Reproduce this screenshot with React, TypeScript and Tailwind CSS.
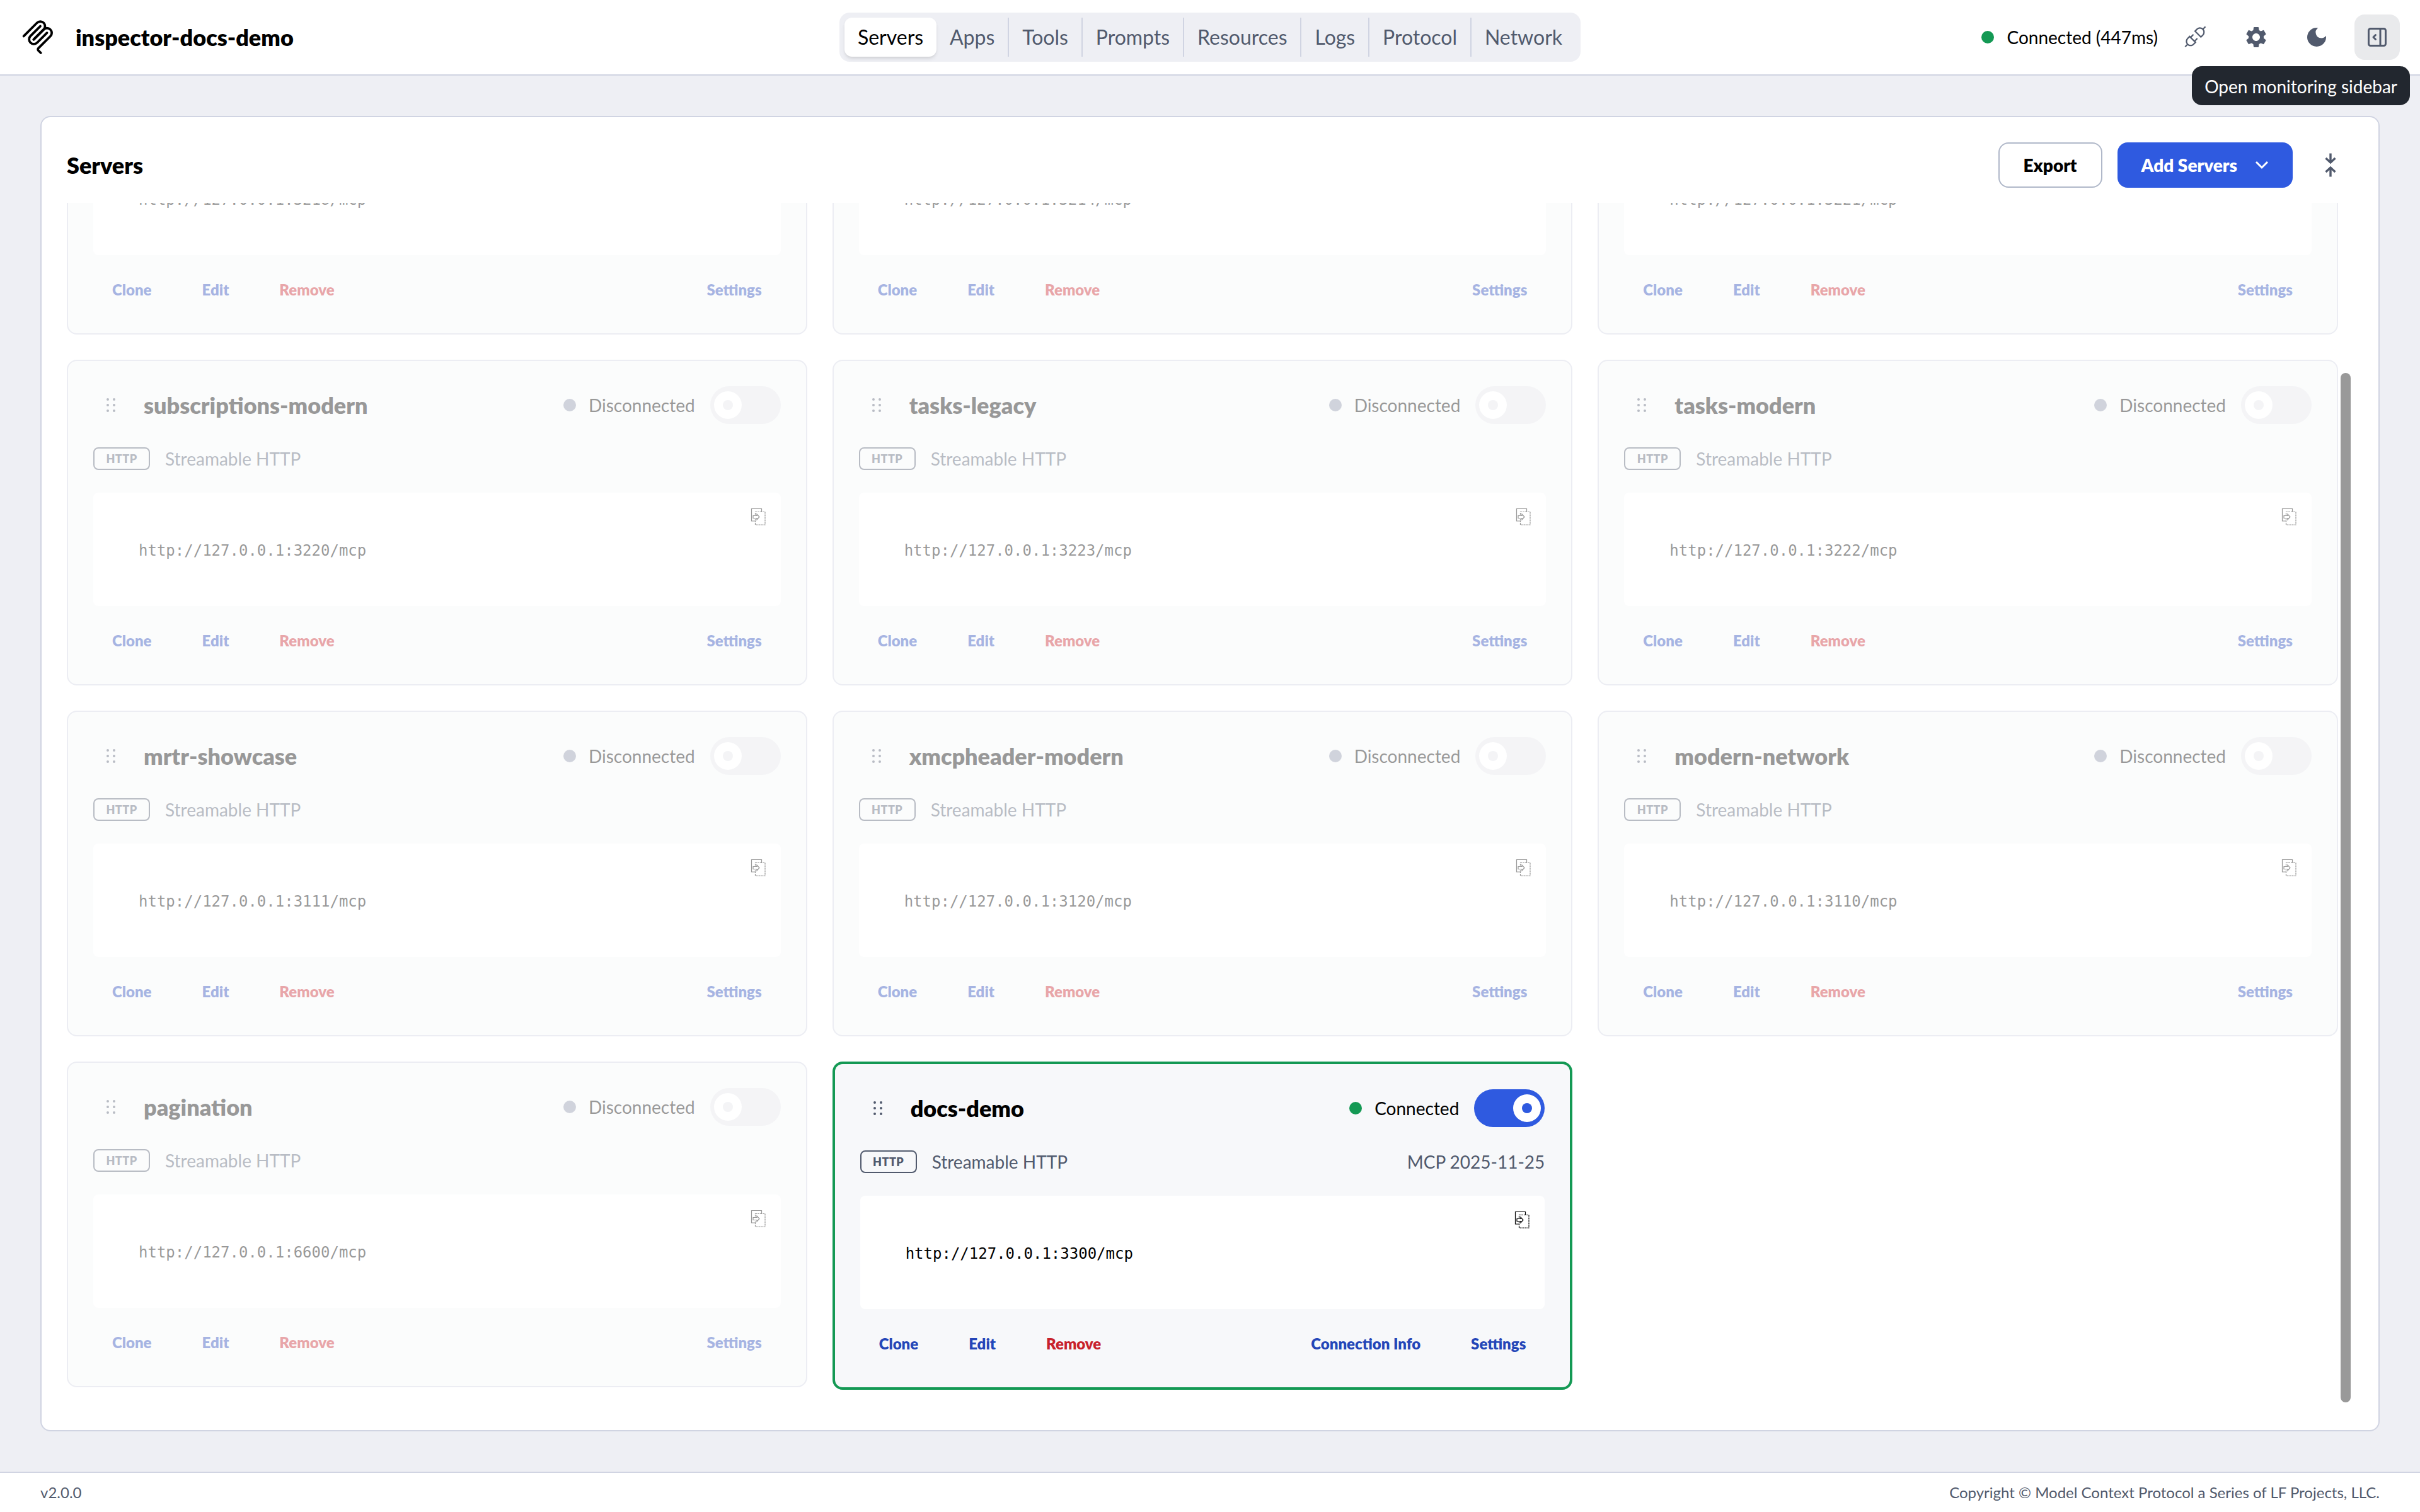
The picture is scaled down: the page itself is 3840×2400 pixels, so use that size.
import React, { useState } from "react";
import { MdSettings, MdDarkMode } from "react-icons/md";
import { VscDebugDisconnect } from "react-icons/vsc";

type Server = {
  name?: string;
  url: string;
  connected?: boolean;
  version?: string;
};

const TABS = ["Servers", "Apps", "Tools", "Prompts", "Resources", "Logs", "Protocol", "Network"];

// entries without a name are scrolled half out of view and only show their lower part
const SERVERS: Server[] = [
  { url: "http://127.0.0.1:3218/mcp" },
  { url: "http://127.0.0.1:3214/mcp" },
  { url: "http://127.0.0.1:3221/mcp" },
  { name: "subscriptions-modern", url: "http://127.0.0.1:3220/mcp" },
  { name: "tasks-legacy", url: "http://127.0.0.1:3223/mcp" },
  { name: "tasks-modern", url: "http://127.0.0.1:3222/mcp" },
  { name: "mrtr-showcase", url: "http://127.0.0.1:3111/mcp" },
  { name: "xmcpheader-modern", url: "http://127.0.0.1:3120/mcp" },
  { name: "modern-network", url: "http://127.0.0.1:3110/mcp" },
  { name: "pagination", url: "http://127.0.0.1:6600/mcp" },
  { name: "docs-demo", url: "http://127.0.0.1:3300/mcp", connected: true, version: "MCP 2025-11-25" },
];

const McpLogo = () => (
  <svg viewBox="0 0 180 180" className="size-14" fill="none" stroke="currentColor" strokeWidth={12} strokeLinecap="round">
    <path d="M18 84.8528L85.8822 16.9706C95.2548 7.59798 110.451 7.59798 119.823 16.9706C129.196 26.3431 129.196 41.5391 119.823 50.9117L68.5581 102.177" />
    <path d="M69.2652 101.47L119.823 50.9117C129.196 41.5391 144.392 41.5391 153.765 50.9117L154.118 51.2652C163.491 60.6378 163.491 75.8338 154.118 85.2063L92.7248 146.6C89.6006 149.724 89.6006 154.789 92.7248 157.913L105.331 170.52" />
    <path d="M102.853 33.9411L52.6482 84.1457C43.2756 93.5183 43.2756 108.714 52.6482 118.087C62.0208 127.459 77.2167 127.459 86.5893 118.087L136.794 67.8822" />
  </svg>
);

const GripIcon = () => (
  <svg viewBox="0 0 14 24" className="w-3.5 h-6" fill="currentColor">
    {[3, 12, 21].map((y) => (
      <g key={y}>
        <circle cx="2" cy={y} r="2" />
        <circle cx="12" cy={y} r="2" />
      </g>
    ))}
  </svg>
);

const CopyIcon = () => (
  <svg viewBox="0 0 24 28" className="w-6 h-7" fill="none" stroke="currentColor" strokeWidth={1.2}>
    <path d="M7 21H1.5V1.5H17.5V6" />
    <path d="M7.5 11V6.5H23V27H7.5V18" strokeDasharray="3 1" />
    <path d="M4 12.5H10V10L14 14.5L10 19V16.5H4Z" />
  </svg>
);

const CollapseIcon = () => (
  <svg viewBox="0 0 20 40" className="w-5 h-10" fill="none" stroke="currentColor" strokeWidth={3.4}>
    <path d="M10 1.5V15M2.5 9L10 16L17.5 9" />
    <path d="M10 38.5V25M2.5 31L10 24L17.5 31" />
  </svg>
);

const SidebarIcon = () => (
  <svg viewBox="0 0 30 30" className="size-[30px]" fill="none" stroke="currentColor" strokeWidth={3}>
    <rect x="1.5" y="1.5" width="27" height="27" rx="3" />
    <path d="M20 2V28" />
    <path d="M12.5 11.5L9 15L12.5 18.500" strokeLinecap="round" strokeLinejoin="round" />
  </svg>
);

const CardButton = ({ children, danger }: { children: React.ReactNode; danger?: boolean }) => (
  <button
    type="button"
    className={`h-[46px] px-[30px] text-[24px] leading-[46px] font-extrabold cursor-pointer ${
      danger ? "text-[#c8222b]" : "text-[#2446b8]"
    }`}
  >
    {children}
  </button>
);

const ServerCard = ({ server }: { server: Server }) => {
  const [on, setOn] = useState(!!server.connected);

  return (
    <article
      className={`rounded-2xl bg-[#f7f8fa] px-10 pt-10 pb-[46px] ${
        server.connected ? "border-4 border-[#149954]" : "border-2 border-[#d0d4e2] opacity-40"
      }`}
    >
      {server.name && (
        <>
          {/* name + status */}
          <div className="flex items-center h-[60px]">
            <button type="button" aria-label="Reorder" className="flex justify-center w-14 text-[#515a6d] cursor-grab">
              <GripIcon />
            </button>
            <h3 className="ml-6 text-[36px] leading-[44px] font-extrabold">{server.name}</h3>
            <div className="flex items-center ml-auto">
              <span className={`size-5 rounded-full ${server.connected ? "bg-[#149954]" : "bg-[#8b94a9]"}`} />
              <span className="ml-5 mr-6 text-[28px] leading-[44px]">
                {server.connected ? "Connected" : "Disconnected"}
              </span>
              <label
                className={`flex items-center w-28 h-[60px] px-1.5 rounded-full cursor-pointer ${
                  on ? "justify-end bg-[#2f5ae0]" : "bg-[#e4e6eb]"
                }`}
              >
                <input
                  type="checkbox"
                  aria-label={`Connect ${server.name}`}
                  checked={on}
                  onChange={(e) => setOn(e.target.checked)}
                  className="sr-only"
                />
                <span className="flex items-center justify-center size-11 rounded-full bg-white">
                  <span className={`size-4 rounded-full ${on ? "bg-[#2f5ae0]" : "bg-[#e4e6eb]"}`} />
                </span>
              </label>
            </div>
          </div>

          {/* transport */}
          <div className="flex items-center h-[45px] mt-8 mb-8 text-[28px] leading-[44px] text-[#515a6d]">
            <span className="flex items-center justify-center w-[90px] h-9 mr-6 rounded-lg border-2 border-[#515a6d] text-[18px] leading-[32px] font-extrabold tracking-wide">
              HTTP
            </span>
            Streamable HTTP
            <span className="ml-auto">{server.version}</span>
          </div>
        </>
      )}

      {/* url */}
      <div className="relative flex items-center h-[180px] pt-1 px-[72px] rounded-lg bg-white">
        <code className="font-['DejaVu_Sans_Mono',monospace] text-[24px] leading-[36px]">{server.url}</code>
        <button type="button" aria-label="Copy" className="absolute top-6 right-6 cursor-pointer">
          <CopyIcon />
        </button>
      </div>

      {/* actions */}
      <div className="flex gap-5 mt-8">
        <CardButton>Clone</CardButton>
        <CardButton>Edit</CardButton>
        <CardButton danger>Remove</CardButton>
        <div className="flex gap-5 ml-auto">
          {server.connected && <CardButton>Connection Info</CardButton>}
          <CardButton>Settings</CardButton>
        </div>
      </div>
    </article>
  );
};

const IconButton = ({ label, className = "", children }: { label: string; className?: string; children: React.ReactNode }) => (
  <button
    type="button"
    aria-label={label}
    className={`flex items-center justify-center size-[72px] rounded-2xl text-[#515a6d] cursor-pointer ${className}`}
  >
    {children}
  </button>
);

const App = () => {
  const [tab, setTab] = useState("Servers");

  return (
    <div className="flex flex-col h-screen bg-[#eeeff4] font-['Lato',sans-serif] text-black">
      <header className="grid grid-cols-[1fr_auto_1fr] items-center h-[120px] px-8 bg-white border-b-2 border-[#d0d4e2]">
        <div className="flex items-center gap-8">
          <McpLogo />
          <h1 className="text-[36px] leading-[44px] font-extrabold">inspector-docs-demo</h1>
        </div>

        <nav className="flex w-[1176px] p-2 rounded-2xl bg-[#eeeff4]">
          {TABS.map((t, i) => (
            <button
              key={t}
              type="button"
              onClick={() => setTab(t)}
              className={`flex-auto h-[62px] text-[32px] leading-[62px] cursor-pointer ${
                t === tab
                  ? "rounded-xl bg-white shadow-md"
                  : `text-[#515a6d] ${i > 1 ? "border-l-2 border-[#d0d4e2]" : ""}`
              }`}
            >
              {t}
            </button>
          ))}
        </nav>

        <div className="flex items-center justify-end gap-6">
          <div className="flex items-center gap-5">
            <span className="size-5 rounded-full bg-[#149954]" />
            <span className="text-[28px] leading-[44px]">Connected (447ms)</span>
          </div>
          <IconButton label="Disconnect">
            <VscDebugDisconnect className="size-10" />
          </IconButton>
          <IconButton label="Settings">
            <MdSettings className="size-10" />
          </IconButton>
          <IconButton label="Toggle dark mode">
            <MdDarkMode className="size-10" />
          </IconButton>
          <div className="relative">
            <IconButton label="Open monitoring sidebar" className="bg-[#e9eaec]">
              <SidebarIcon />
            </IconButton>
            <div
              role="tooltip"
              className="absolute -right-4 top-[82px] z-10 h-[62px] px-5 rounded-2xl bg-[#22272f] text-[28px] leading-[64px] text-white whitespace-nowrap"
            >
              Open monitoring sidebar
            </div>
          </div>
        </div>
      </header>

      <main className="flex flex-col flex-1 min-h-0 p-16">
        <section className="flex flex-col flex-1 min-h-0 gap-6 p-10 rounded-2xl bg-white border-2 border-[#d0d4e2]">
          <div className="flex items-center gap-6">
            <h2 className="mr-auto text-[36px] leading-[44px] font-extrabold">Servers</h2>
            <button type="button" className="h-[72px] px-[38px] rounded-2xl border-2 border-[#b0b8c9] text-[28px] font-extrabold cursor-pointer">
              Export
            </button>
            <button type="button" className="flex items-center gap-7 h-[72px] px-[38px] rounded-2xl bg-[#2f5ae0] text-[28px] font-extrabold text-white cursor-pointer">
              Add Servers
              <svg viewBox="0 0 22 14" className="w-[22px] h-3.5" fill="none" stroke="currentColor" strokeWidth={3}>
                <path d="M2 2L11 11L20 2" />
              </svg>
            </button>
            <IconButton label="Collapse all">
              <CollapseIcon />
            </IconButton>
          </div>

          {/* the list is scrolled to its end */}
          <div className="flex flex-1 min-h-0 overflow-hidden">
            <div className="flex flex-col justify-end flex-1">
              <div className="grid grid-cols-3 items-start gap-10 pb-6">
                {SERVERS.map((s) => (
                  <ServerCard key={s.url} server={s} />
                ))}
              </div>
            </div>
            <div className="flex flex-col justify-end w-6 p-1">
              <div className="h-[86%] w-4 rounded-full bg-[#999999]" />
            </div>
          </div>
        </section>
      </main>

      <footer className="flex items-center justify-between h-16 px-16 bg-white border-t-2 border-[#d0d4e2] text-[24px] leading-[36px] text-[#515a6d]">
        <span>v2.0.0</span>
        <span>Copyright © Model Context Protocol a Series of LF Projects, LLC.</span>
      </footer>
    </div>
  );
};

export default App;
